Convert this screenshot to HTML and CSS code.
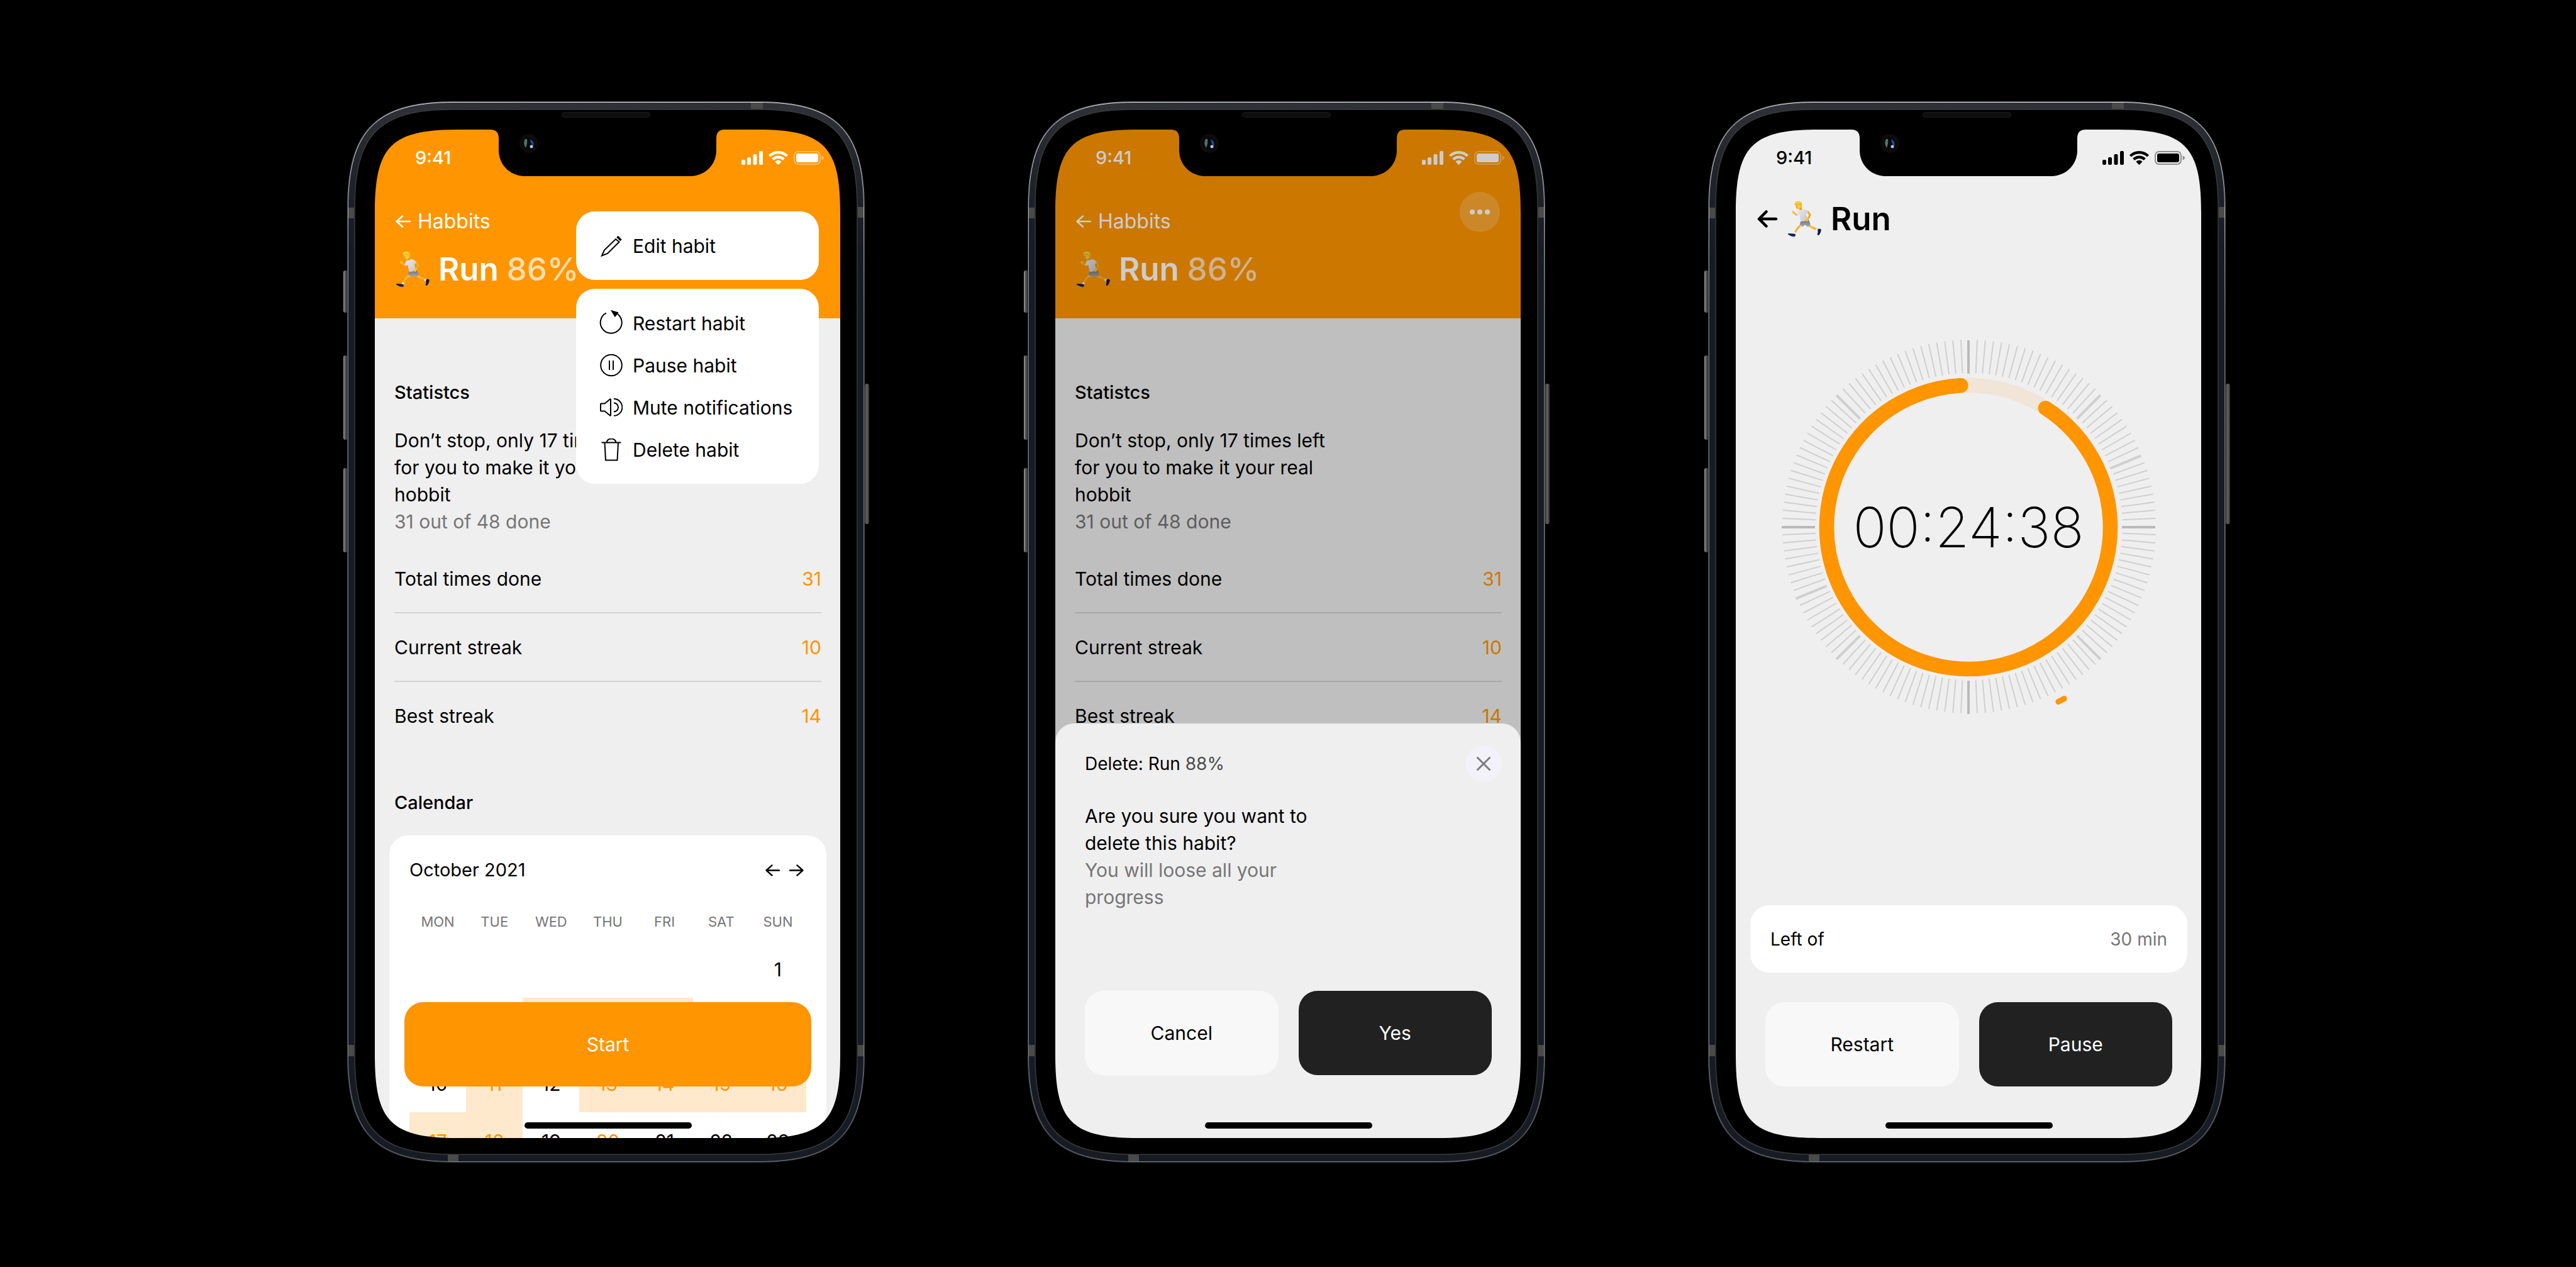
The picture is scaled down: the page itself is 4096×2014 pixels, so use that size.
FILE: index.html
```html
<!DOCTYPE html>
<html lang="en">
<head>
<meta charset="utf-8">
<meta name="viewport" content="width=device-width, initial-scale=1">
<title>Habit tracker</title>
<link rel="stylesheet" href="styles.css">
</head>
<body>
<svg class="sprite" aria-hidden="true">
  <defs>
    <linearGradient id="metal" x1="0" y1="0" x2="0" y2="1">
      <stop offset="0" stop-color="#303238"/>
      <stop offset="0.06" stop-color="#22252c"/>
      <stop offset="0.14" stop-color="#171b23"/>
      <stop offset="1" stop-color="#171b23"/>
    </linearGradient>
    <linearGradient id="shine" x1="0" y1="0" x2="0" y2="1">
      <stop offset="0" stop-color="#f2f2f2"/>
      <stop offset="0.08" stop-color="#b9b9bd"/>
      <stop offset="0.2" stop-color="#77777b"/>
      <stop offset="1" stop-color="#77777b"/>
    </linearGradient>
    <linearGradient id="key-left" x1="0" y1="0" x2="1" y2="0">
      <stop offset="0" stop-color="#a0a0a0"/>
      <stop offset="0.4" stop-color="#555"/>
      <stop offset="1" stop-color="#2a2a2a"/>
    </linearGradient>
    <linearGradient id="key-right" x1="1" y1="0" x2="0" y2="0">
      <stop offset="0" stop-color="#2c2c2c"/>
      <stop offset="0.5" stop-color="#626262"/>
      <stop offset="1" stop-color="#3a3a3a"/>
    </linearGradient>
    <linearGradient id="skin" x1="0" y1="0" x2="0" y2="1">
      <stop offset="0" stop-color="#ffcf3a"/>
      <stop offset="1" stop-color="#f3a51c"/>
    </linearGradient>
    <linearGradient id="shirt" x1="0" y1="0" x2="1" y2="1">
      <stop offset="0" stop-color="#ececf0"/>
      <stop offset="1" stop-color="#c4c4cb"/>
    </linearGradient>
    <linearGradient id="shorts" x1="0" y1="0" x2="0" y2="1">
      <stop offset="0" stop-color="#707278"/>
      <stop offset="1" stop-color="#a9abb1"/>
    </linearGradient>
  </defs>

  <symbol id="device" viewBox="0 0 823 1687" overflow="visible">
    <g fill="url(#key-left)">
      <rect x="-6" y="269" width="7" height="67" rx="3"/>
      <rect x="-6" y="404" width="7" height="134" rx="3"/>
      <rect x="-6" y="583" width="7" height="134" rx="3"/>
    </g>
    <rect x="823" y="449" width="7" height="223" rx="3" fill="url(#key-right)"/>
    <path fill="url(#metal)" fill-rule="evenodd" d="M170 0H653C778 0 823 45 823 170V1517C823 1642 778 1687 653 1687H170C45 1687 0 1642 0 1517V170C0 45 45 0 170 0ZM168 13C51 13 12 52 12 169V1518C12 1635 51 1674 168 1674H655C772 1674 811 1635 811 1518V169C811 52 772 13 655 13Z"/>
    <g fill="#4a4a4a">
      <rect x="642" y="1" width="19" height="11"/>
      <rect x="160" y="1674" width="17" height="11"/>
      <rect x="1" y="169" width="10" height="17"/>
      <rect x="812" y="168" width="10" height="17"/>
      <rect x="1" y="1500" width="10" height="18"/>
      <rect x="812" y="1500" width="10" height="18"/>
    </g>
    <path fill="none" stroke="#3c3d42" d="M170 .5H653C777 .5 822.500 45 822.500 170V1517C822.500 1642 777 1686.500 653 1686.500H170C45 1686.500 .5 1642 .5 1517V170C.5 45 45 .5 170 .5Z"/>
    <path fill="none" stroke="url(#shine)" d="M170 1.500H653C777 1.500 821.500 46 821.500 170V1517C821.500 1641 777 1685.500 653 1685.500H170C46 1685.500 1.500 1641 1.500 1517V170C1.500 46 46 1.500 170 1.500Z"/>
    <path fill="#000" fill-rule="evenodd" d="M168 13H655C772 13 811 52 811 169V1518C811 1635 772 1674 655 1674H168C51 1674 12 1635 12 1518V169C12 52 51 13 168 13ZM176 45C70 45 44 71 44 177V1516C44 1622 70 1648 176 1648H652C758 1648 784 1622 784 1516V177C784 71 758 45 652 45H600Q587 45 587 59V78C587 101 569 119 545 119H283C259 119 241 101 241 78V59Q241 45 228 45Z"/>
    <path fill="none" stroke="#3a3a3a" stroke-width="1.500" d="M168 13H655C772 13 811 52 811 169V1518C811 1635 772 1674 655 1674H168C51 1674 12 1635 12 1518V169C12 52 51 13 168 13Z"/>
    <rect x="341.500" y="17.500" width="140" height="8" rx="4" fill="#0e0e0e" stroke="#1b1b1b"/>
    <circle cx="289" cy="67" r="15" fill="#0c0c0d"/>
    <circle cx="289" cy="67" r="9" fill="#05070b"/>
    <path d="M283 60Q279 67 284 74Q287 67 286 60Z" fill="#4d7563"/>
    <path d="M291 60Q298 63 296 72Q292 68 291 60Z" fill="#1d4f96"/>
    <circle cx="293" cy="72" r="2.500" fill="#b9c6ea"/>
  </symbol>

  <symbol id="signal" viewBox="0 0 34 22">
    <rect x="0" y="14" width="6" height="8" rx="2"/><rect x="9" y="10" width="6" height="12" rx="2"/>
    <rect x="18.500" y="5" width="6" height="17" rx="2"/><rect x="28" y="0" width="6" height="22" rx="2"/>
  </symbol>
  <symbol id="wifi" viewBox="0 0 31 22">
    <path d="M15.500 0C9.700 0 4.400 2.200 .4 5.900C.1 6.200 .1 6.600 .4 6.900L2.500 9.100C2.800 9.400 3.200 9.400 3.500 9.100C6.700 6.200 10.900 4.600 15.500 4.600S24.300 6.200 27.500 9.100C27.800 9.400 28.200 9.400 28.500 9.100L30.600 6.900C30.900 6.600 30.900 6.200 30.600 5.900C26.600 2.200 21.300 0 15.500 0Z"/>
    <path d="M15.500 7.600C11.700 7.600 8.200 9 5.600 11.300C5.300 11.600 5.300 12 5.600 12.300L7.800 14.500C8.100 14.800 8.500 14.800 8.800 14.500C10.600 13 12.900 12.100 15.500 12.100S20.400 13 22.200 14.500C22.500 14.800 22.900 14.800 23.200 14.500L25.400 12.300C25.700 12 25.700 11.600 25.400 11.300C22.800 9 19.300 7.600 15.500 7.600Z"/>
    <path d="M15.500 14.800C13.700 14.800 12.100 15.500 10.900 16.500C10.600 16.800 10.600 17.200 10.900 17.500L15 21.700C15.300 22 15.700 22 16 21.700L20.100 17.500C20.400 17.200 20.400 16.800 20.100 16.500C18.900 15.500 17.300 14.800 15.500 14.800Z"/>
  </symbol>
  <symbol id="battery" viewBox="0 0 48 22">
    <rect x="1" y="1" width="41" height="20" rx="6" fill="none" stroke="currentColor" stroke-width="2" opacity=".4"/>
    <rect x="4" y="4" width="35" height="14" rx="3"/>
    <path d="M44.500 7.500C47 8.500 48 9.500 48 11S47 13.500 44.500 14.500Z" opacity=".4"/>
  </symbol>
  <symbol id="arrow" viewBox="0 0 24 20">
    <path d="M23 10H1.500M11 1.500L1.500 10L11 18.500" fill="none" stroke="currentColor" stroke-width="2.500" stroke-linecap="round" stroke-linejoin="round"/>
  </symbol>
  <symbol id="arrow-bold" viewBox="0 0 34 28">
    <path d="M30 14H3M14.500 2.500L3 14L14.500 25.500" fill="none" stroke="currentColor" stroke-width="4.500" stroke-linecap="round" stroke-linejoin="round"/>
  </symbol>

  <symbol id="runner" viewBox="30 60 240 260">
    <path d="M170 140Q190 156 184 170L166 200" fill="none" stroke="#f2ab22" stroke-width="14" stroke-linecap="round" stroke-linejoin="round"/>
    <path d="M112 150L94 162L76 148" fill="none" stroke="#f7b52a" stroke-width="12" stroke-linecap="round" stroke-linejoin="round"/>
    <circle cx="70" cy="142" r="9" fill="#ffc53a"/>
    <path d="M172 232Q196 248 236 262" fill="none" stroke="url(#skin)" stroke-width="14" stroke-linecap="round"/>
    <path d="M128 232Q104 246 96 262L82 288" fill="none" stroke="#f9b42a" stroke-width="14" stroke-linecap="round"/>
    <path d="M228 256L246 260L240 274L228 268Z" fill="#f4f4f6"/>
    <path d="M244 259Q262 256 265 264Q262 290 248 303Q240 306 238 299L242 278Q238 268 244 259Z" fill="#10195e"/>
    <path d="M76 281L89 284L86 300L72 293Z" fill="#f4f4f6"/>
    <path d="M36 290Q56 292 74 292L86 296Q88 310 80 314Q66 316 38 300Q32 294 36 290Z" fill="#10195e"/>
    <path d="M40 302Q62 316 82 312" fill="none" stroke="#dfe0ea" stroke-width="2"/>
    <path d="M124 204L178 196Q190 216 190 236L170 245L152 230L136 246L114 230Z" fill="url(#shorts)"/>
    <path d="M114 230L136 246" stroke="#f2f2f4" stroke-width="3"/>
    <path d="M124 120L104 132L92 158L106 166L114 158L124 206Q150 210 172 198L160 156L173 144Q168 126 150 122Z" fill="url(#shirt)"/>
    <path d="M160 188L176 186Q178 200 168 208Q156 206 154 196Z" fill="#ffc130"/>
    <path d="M112 112L128 106L132 124Q122 132 112 124Z" fill="#e89c1c"/>
    <path d="M86 92Q86 120 104 122Q122 122 126 96L112 84Z" fill="#ffc83a"/>
    <path d="M80 84Q84 68 104 67Q126 66 131 84Q134 102 126 112Q118 110 116 98L104 94Q96 98 84 94Q78 90 80 84Z" fill="#f2c020"/>
    <path d="M84 80Q96 70 118 76" fill="none" stroke="#ffe06a" stroke-width="5" stroke-linecap="round"/>
    <circle cx="94" cy="102" r="2.500" fill="#4a3312"/>
    <path d="M92 114Q98 117 103 112" fill="none" stroke="#a55a18" stroke-width="2"/>
  </symbol>

  <g fill="none" stroke="currentColor" stroke-width="2" stroke-linejoin="round" stroke-linecap="round">
    <symbol id="edit" viewBox="0 0 36 36"><path d="M3 33.500L7 24.500L25 7L30.500 11.500L12 30Z"/><path d="M27.500 3L33.500 9" stroke-width="3.500" stroke-linecap="butt"/></symbol>
    <symbol id="restart" viewBox="0 0 36 36" overflow="visible"><path d="M9.800 1.700A17 17 0 1 0 26 1.900"/><path d="M19 -1.500L28 1L24 6.500Z" fill="currentColor"/></symbol>
    <symbol id="pause" viewBox="0 0 36 36"><circle cx="18" cy="17.500" r="16.800"/><path d="M15 10V25M21 10V25" stroke-linecap="butt"/></symbol>
    <symbol id="mute" viewBox="0 0 36 36"><path d="M1 12Q1 11.500 2 11.500H7.500L16 4.500Q17 4 17 5V30Q17 31 16 30.500L7.500 23.500H2Q1 23.500 1 23Z"/><path d="M22 4A13.400 13.400 0 0 1 22 30.800M22 10.500A7 7 0 0 1 22 24.500" stroke-linecap="butt"/></symbol>
    <symbol id="trash" viewBox="0 0 36 36"><path d="M2.500 6.500H33.500M7.500 6.500L9 34.500H27.500L29 6.500M10.500 6.500C12 -1.500 24 -1.500 25.500 6.500" stroke-linecap="butt" stroke-linejoin="miter"/></symbol>
  </g>

  <symbol id="ticks" viewBox="-320 -320 640 640">
    <g id="tick-set">
      <path d="M0 -244V-297" transform="rotate(2.500)"/><path d="M0 -244V-297" transform="rotate(5)"/>
      <path d="M0 -244V-297" transform="rotate(7.500)"/><path d="M0 -244V-297" transform="rotate(10)"/>
      <path d="M0 -244V-297" transform="rotate(12.500)"/><path d="M0 -244V-297" transform="rotate(15)"/>
      <path d="M0 -244V-297" transform="rotate(17.500)"/><path d="M0 -244V-297" transform="rotate(20)"/>
    </g>
  </symbol>
</svg>

<main class="showcase">

  <section class="phone" aria-label="Habit menu">
    <div class="screen">
      <header class="hero">
        <div class="status">
          <span class="clock">9:41</span>
          <span class="indicators">
            <svg class="i-signal"><use href="#signal"/></svg>
            <svg class="i-wifi"><use href="#wifi"/></svg>
            <svg class="i-battery"><use href="#battery"/></svg>
          </span>
        </div>
        <nav class="nav"><a class="back" href="#habits"><svg class="i-arrow"><use href="#arrow"/></svg>Habbits</a></nav>
        <h1 class="title"><svg class="i-runner"><use href="#runner"/></svg><span>Run <span class="share">86%</span></span></h1>
      </header>

      <section class="stats">
        <h2 class="heading">Statistcs</h2>
        <p class="note">Don’t stop, only 17 times left for you to make it your real hobbit</p>
        <p class="note muted">31 out of 48 done</p>
        <dl class="figures">
          <div class="figure"><dt>Total times done</dt><dd>31</dd></div>
          <div class="figure"><dt>Current streak</dt><dd>10</dd></div>
          <div class="figure"><dt>Best streak</dt><dd>14</dd></div>
        </dl>
        <h2 class="heading">Calendar</h2>
      </section>

      <section class="calendar">
        <div class="month">
          <h3 class="month-name">October 2021</h3>
          <div class="month-nav">
            <button class="step" type="button" aria-label="Previous month"><svg class="i-step"><use href="#arrow"/></svg></button>
            <button class="step next" type="button" aria-label="Next month"><svg class="i-step"><use href="#arrow"/></svg></button>
          </div>
        </div>
        <table class="days">
          <thead><tr><th>MON</th><th>TUE</th><th>WED</th><th>THU</th><th>FRI</th><th>SAT</th><th>SUN</th></tr></thead>
          <tbody>
            <tr><td></td><td></td><td></td><td></td><td></td><td></td><td>1</td></tr>
            <tr><td>3</td><td>4</td><td class="done">5</td><td class="done">6</td><td class="done">7</td><td>8</td><td>9</td></tr>
            <tr><td>10</td><td class="done">11</td><td>12</td><td class="done">13</td><td class="done">14</td><td class="done">15</td><td class="done">16</td></tr>
            <tr><td class="done">17</td><td class="done">18</td><td>19</td><td class="today">20</td><td>21</td><td>22</td><td>23</td></tr>
          </tbody>
        </table>
      </section>

      <div class="dock"><button class="action accent" type="button">Start</button></div>

      <div class="menus">
        <div class="menu">
          <button class="item" type="button"><svg class="i-menu"><use href="#edit"/></svg>Edit habit</button>
        </div>
        <div class="menu">
          <button class="item" type="button"><svg class="i-menu"><use href="#restart"/></svg>Restart habit</button>
          <button class="item" type="button"><svg class="i-menu"><use href="#pause"/></svg>Pause habit</button>
          <button class="item" type="button"><svg class="i-menu"><use href="#mute"/></svg>Mute notifications</button>
          <button class="item" type="button"><svg class="i-menu"><use href="#trash"/></svg>Delete habit</button>
        </div>
      </div>
      <span class="home-bar"></span>
    </div>
    <svg class="bezel" aria-hidden="true"><use href="#device"/></svg>
  </section>

  <section class="phone" aria-label="Delete confirmation">
    <div class="screen">
      <header class="hero">
        <div class="status">
          <span class="clock">9:41</span>
          <span class="indicators">
            <svg class="i-signal"><use href="#signal"/></svg>
            <svg class="i-wifi"><use href="#wifi"/></svg>
            <svg class="i-battery"><use href="#battery"/></svg>
          </span>
        </div>
        <nav class="nav">
          <a class="back" href="#habits"><svg class="i-arrow"><use href="#arrow"/></svg>Habbits</a>
          <button class="more" type="button" aria-label="More"><span class="dot"></span><span class="dot"></span><span class="dot"></span></button>
        </nav>
        <h1 class="title"><svg class="i-runner"><use href="#runner"/></svg><span>Run <span class="share">86%</span></span></h1>
      </header>

      <section class="stats">
        <h2 class="heading">Statistcs</h2>
        <p class="note">Don’t stop, only 17 times left for you to make it your real hobbit</p>
        <p class="note muted">31 out of 48 done</p>
        <dl class="figures">
          <div class="figure"><dt>Total times done</dt><dd>31</dd></div>
          <div class="figure"><dt>Current streak</dt><dd>10</dd></div>
          <div class="figure"><dt>Best streak</dt><dd>14</dd></div>
        </dl>
      </section>

      <div class="shade"></div>
      <div class="sheet" role="dialog" aria-labelledby="sheet-title">
        <div class="sheet-head">
          <h2 class="sheet-title" id="sheet-title">Delete: Run <span class="sheet-share">88%</span></h2>
          <button class="close" type="button" aria-label="Close"><svg class="i-close" viewBox="0 0 22 22"><path d="M1.500 1.500L20.500 20.500M20.500 1.500L1.500 20.500" stroke="currentColor" stroke-width="3" stroke-linecap="round"/></svg></button>
        </div>
        <p class="note ask">Are you sure you want to delete this habit?</p>
        <p class="note ask muted">You will loose all your progress</p>
        <div class="actions">
          <button class="action light" type="button">Cancel</button>
          <button class="action dark" type="button">Yes</button>
        </div>
      </div>
      <span class="home-bar"></span>
    </div>
    <svg class="bezel" aria-hidden="true"><use href="#device"/></svg>
  </section>

  <section class="phone" aria-label="Timer">
    <div class="screen timer">
      <div class="status">
        <span class="clock">9:41</span>
        <span class="indicators">
          <svg class="i-signal"><use href="#signal"/></svg>
          <svg class="i-wifi"><use href="#wifi"/></svg>
          <svg class="i-battery"><use href="#battery"/></svg>
        </span>
      </div>
      <h1 class="title timer-title">
        <a class="back" href="#run" aria-label="Back"><svg class="i-arrow-bold"><use href="#arrow-bold"/></svg></a>
        <svg class="i-runner"><use href="#runner"/></svg><span>Run</span>
      </h1>
      <div class="dial">
        <svg class="dial-face" viewBox="-320 -320 640 640" fill="none">
          <g stroke="#d0d0d0" stroke-width="2" transform="translate(1 -1)">
            <use href="#tick-set"/>
            <use href="#tick-set" transform="rotate(22.500)"/>
            <use href="#tick-set" transform="rotate(45)"/>
            <use href="#tick-set" transform="rotate(67.500)"/>
            <use href="#tick-set" transform="rotate(90)"/>
            <use href="#tick-set" transform="rotate(112.500)"/>
            <use href="#tick-set" transform="rotate(135)"/>
            <use href="#tick-set" transform="rotate(157.500)"/>
            <use href="#tick-set" transform="rotate(180)"/>
            <use href="#tick-set" transform="rotate(202.500)"/>
            <use href="#tick-set" transform="rotate(225)"/>
            <use href="#tick-set" transform="rotate(247.500)"/>
            <use href="#tick-set" transform="rotate(270)"/>
            <use href="#tick-set" transform="rotate(292.500)"/>
            <use href="#tick-set" transform="rotate(315)"/>
            <use href="#tick-set" transform="rotate(337.500)"/>
            <path d="M0 -244V-297" transform="rotate(22.500)"/>
            <path d="M0 -244V-297" transform="rotate(112.500)"/>
            <path d="M0 -244V-297" transform="rotate(157.500)"/>
            <path d="M0 -244V-297" transform="rotate(202.500)"/>
            <path d="M0 -244V-297" transform="rotate(292.500)"/>
            <path d="M0 -244V-297" transform="rotate(337.500)"/>
          </g>
          <g stroke="#cfcfcf" stroke-width="4">
            <path d="M0 -244V-297" transform="rotate(45)"/><path d="M0 -244V-297" transform="rotate(67.500)"/>
            <path d="M0 -244V-297" transform="rotate(135)"/><path d="M0 -244V-297" transform="rotate(225)"/>
            <path d="M0 -244V-297" transform="rotate(247.500)"/><path d="M0 -244V-297" transform="rotate(315)"/>
          </g>
          <path d="M0 -244V-297M0 244V297M-244 0H-297M244 0H297" stroke="#bababa" stroke-width="4"/>
          <circle r="225.500" stroke="#ff9500" stroke-opacity=".1" stroke-width="23.500"/>
          <path d="M122.500 -189.300A225.500 225.500 0 1 1 -12.200 -225.200" stroke="#ff9500" stroke-width="23.500" stroke-linecap="round"/>
          <path d="M142.800 277.400L152.200 272.600" stroke="#ff9500" stroke-width="9" stroke-linecap="round"/>
        </svg>
        <time class="elapsed">00:24:38</time>
      </div>
      <div class="timer-foot">
        <div class="target"><span>Left of</span><span class="muted">30 min</span></div>
        <div class="actions timer-actions">
          <button class="action light" type="button">Restart</button>
          <button class="action dark" type="button">Pause</button>
        </div>
      </div>
      <span class="home-bar"></span>
    </div>
    <svg class="bezel" aria-hidden="true"><use href="#device"/></svg>
  </section>

</main>
</body>
</html>
```
FILE: styles.css
```css
:root {
  --accent: #ff9500;
  --surface: #efefef;
  --muted: #767676;
}

* {
  box-sizing: border-box;
  margin: 0;
  padding: 0;
}

body {
  background: #000;
  color: #000;
  font-family: Inter, "Liberation Sans", sans-serif;
  font-size: 30px;
  line-height: 36px;
}

button {
  border: 0;
  background: none;
  color: inherit;
  font: inherit;
}

a {
  color: inherit;
  text-decoration: none;
}

svg {
  display: block;
  flex: none;
  fill: currentColor;
}

.sprite {
  position: absolute;
  width: 0;
  height: 0;
}

.showcase {
  display: flex;
  flex-wrap: wrap;
  align-items: center;
  justify-content: center;
  gap: 259px;
  min-height: 100vh;
  padding: 0 5px 5px 0;
}

/* Device */

.phone {
  position: relative;
  display: grid;
  grid-template-rows: minmax(0, 1fr);
  flex: 0 1 823px;
  min-height: 0;
  aspect-ratio: 823 / 1687;
  padding: 45px 39px 39px 44px;
}

.bezel {
  position: absolute;
  inset: 0;
  width: 100%;
  height: 100%;
  overflow: visible;
  pointer-events: none;
}

.screen {
  position: relative;
  min-height: 0;
  overflow: hidden;
  background: var(--surface);
}

.home-bar {
  position: absolute;
  bottom: 15px;
  left: 50%;
  width: 266px;
  height: 10px;
  margin-left: -132px;
  border-radius: 5px;
  background: #000;
}

.status {
  display: flex;
  align-items: center;
  justify-content: space-between;
  height: 90px;
  padding: 0 26px 0 64px;
}

.clock {
  font-size: 29px;
  font-weight: 500;
}

.indicators {
  display: flex;
  align-items: center;
  gap: 9px;
}

.i-signal { width: 34px; height: 22px; }
.i-wifi { width: 31px; height: 22px; }
.i-battery { width: 48px; height: 22px; }
.i-arrow { width: 24px; height: 20px; }
.i-arrow-bold { width: 34px; height: 28px; }
.i-runner { width: 55px; height: 60px; }
.i-step { width: 23px; height: 19px; }
.i-close { width: 22px; height: 22px; }

.i-menu {
  width: 36px;
  height: 36px;
  overflow: visible;
  fill: none;
  stroke: currentColor;
  stroke-width: 2px;
}

/* Habit header */

.hero {
  height: 300px;
  background: var(--accent);
  color: #fff;
}

.nav {
  display: flex;
  align-items: flex-start;
  justify-content: space-between;
  height: 40px;
  margin-top: 36px;
  padding: 0 33px 0 33px;
}

.nav .back {
  display: flex;
  align-items: center;
  gap: 11px;
  font-size: 32px;
  line-height: 40px;
}

.more {
  display: flex;
  align-items: center;
  justify-content: center;
  gap: 4px;
  width: 64px;
  height: 64px;
  margin-top: -27px;
  border-radius: 50%;
  background: rgba(255, 255, 255, 0.2);
}

.dot {
  width: 8px;
  height: 8px;
  border-radius: 50%;
  background: #fff;
}

.title {
  display: flex;
  align-items: center;
  gap: 13px;
  margin-top: 24px;
  padding-left: 33px;
  font-size: 51px;
  font-weight: 600;
  line-height: 64px;
}

.share {
  color: rgba(255, 255, 255, 0.7);
  font-weight: 500;
}

/* Statistics */

.stats {
  padding: 100px 30px 0 31px;
}

.heading {
  font-size: 29px;
  font-weight: 500;
}

.note {
  max-width: 430px;
  line-height: 43px;
}

.heading + .note {
  margin-top: 37px;
}

.muted {
  color: var(--muted);
}

.figures {
  margin: 15px 0 65px;
}

.figure {
  display: flex;
  align-items: center;
  justify-content: space-between;
  height: 109px;
  border-bottom: 2px solid #d3d3d3;
}

.figure:last-child {
  border-bottom-color: transparent;
}

.figure dd {
  color: var(--accent);
}

/* Calendar */

.calendar {
  margin: 34px 22px 0 23px;
  padding: 37px 32px 0 32px;
  border-radius: 30px;
  background: #fff;
}

.month {
  display: flex;
  align-items: center;
  justify-content: space-between;
  padding-right: 4px;
}

.month-name {
  font-size: 29px;
  font-weight: 400;
}

.month-nav {
  display: flex;
  gap: 15px;
}

.step.next {
  transform: rotate(180deg);
}

.days {
  width: 100%;
  margin-top: 34px;
  border-collapse: collapse;
  table-layout: fixed;
  text-align: center;
}

.days th {
  height: 60px;
  color: var(--muted);
  font-size: 22px;
  font-weight: 400;
}

.days td {
  height: 91px;
}

.days .done {
  background: #ffe9cc;
  color: var(--accent);
}

.days .today {
  color: var(--accent);
}

/* Buttons */

.dock {
  position: absolute;
  right: 46px;
  bottom: 82px;
  left: 47px;
  display: grid;
}

.action {
  height: 134px;
  border-radius: 30px;
}

.accent {
  background: var(--accent);
  color: #fff;
}

.light {
  background: #f8f8f8;
}

.dark {
  background: #212121;
  color: #fff;
}

.actions {
  display: grid;
  grid-template-columns: 1fr 1fr;
  gap: 32px;
}

/* Context menus */

.menus {
  position: absolute;
  top: 130px;
  right: 34px;
  display: grid;
  gap: 14px;
  width: 386px;
}

.menu {
  padding: 21px 0 21px 38px;
  border-radius: 30px;
  background: #fff;
}

.item {
  display: flex;
  align-items: center;
  gap: 16px;
  width: 100%;
  height: 67px;
  text-align: left;
  white-space: nowrap;
}

/* Delete sheet */

.shade {
  position: absolute;
  inset: 0;
  background: rgba(0, 0, 0, 0.2);
}

.sheet {
  position: absolute;
  right: 0;
  bottom: 0;
  left: 0;
  padding: 35px 46px 100px 47px;
  border-radius: 30px 30px 0 0;
  background: var(--surface);
}

.sheet-head {
  display: flex;
  align-items: center;
  justify-content: space-between;
  margin: 0 -16px 33px 0;
}

.sheet-title {
  font-size: 28px;
  font-weight: 400;
}

.sheet-share {
  color: #4c4c4c;
}

.close {
  display: grid;
  place-items: center;
  width: 58px;
  height: 58px;
  border-radius: 50%;
  background: #f2f2f8;
  color: #7c7c80;
}

.ask {
  max-width: 380px;
}

.sheet .actions {
  margin-top: 127px;
}

/* Timer */

.timer {
  display: flex;
  flex-direction: column;
}

.timer-title {
  gap: 14px;
  margin-top: 20px;
  padding-left: 34px;
}

.dial {
  display: grid;
  place-items: center;
  margin-top: 138px;
}

.dial > * {
  grid-area: 1 / 1;
}

.dial-face {
  width: 640px;
  height: 640px;
  fill: none;
}

.elapsed {
  font-size: 88px;
  font-weight: 200;
  line-height: 100px;
}

.timer-foot {
  margin-top: auto;
  padding: 0 22px 82px 23px;
}

.target {
  display: flex;
  align-items: center;
  justify-content: space-between;
  height: 107px;
  padding: 0 32px;
  border-radius: 30px;
  background: #fff;
  font-size: 28px;
}

.timer-actions {
  margin: 47px 24px 0;
}
```
